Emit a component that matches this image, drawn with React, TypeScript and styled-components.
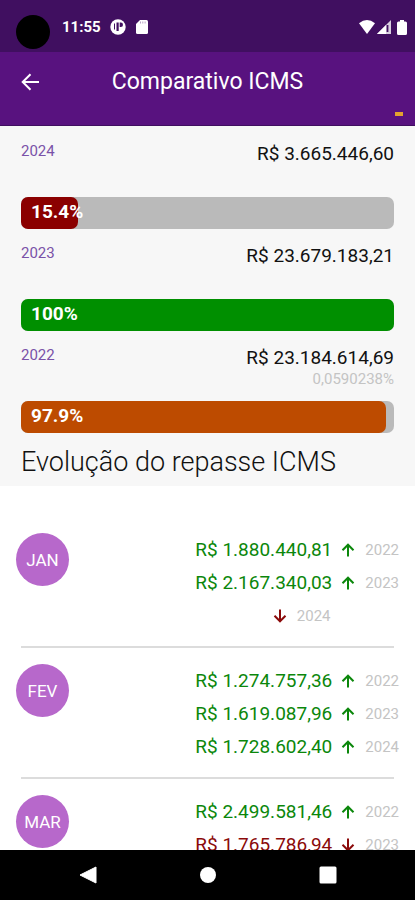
import React from "react";
import styled, { createGlobalStyle } from "styled-components";

const GlobalStyle = createGlobalStyle`
  *, *::before, *::after { box-sizing: border-box; }
  body { margin: 0; background: #ffffff; font-family: Roboto, "Noto Sans", sans-serif; }
  h1, h2, p, ul { margin: 0; padding: 0; }
  ul { list-style: none; }
`;

const Screen = styled.div`
  display: flex;
  flex-direction: column;
  height: 100vh;
  overflow: hidden;
`;

const StatusBar = styled.div`
  display: flex;
  align-items: center;
  flex: none;
  height: 52px;
  padding: 2px 4px 0 16px;
  background: #400f60;
  color: #ffffff;
`;

const CameraHole = styled.span`
  width: 34px;
  height: 34px;
  margin: 13px 12px 0 0;
  align-self: flex-start;
  border-radius: 50%;
  background: #000000;
`;

const Clock = styled.span`
  font-size: 15px;
  font-weight: 700;
  line-height: 20px;
  margin-right: 9px;
`;

const StatusIcons = styled.div<{ $end?: boolean }>`
  display: flex;
  align-items: center;
  gap: ${(p) => (p.$end ? 2 : 10)}px;
  margin-left: ${(p) => (p.$end ? "auto" : "0")};
`;

const AppBar = styled.header`
  display: grid;
  grid-template-columns: 48px 1fr 48px;
  align-items: start;
  flex: none;
  height: 74px;
  padding: 14px 6px 0;
  background: #58127f;
  border-bottom: 1px solid #400f60;
  color: #ffffff;
`;

const BackButton = styled.button`
  display: flex;
  align-items: center;
  justify-content: center;
  height: 32px;
  padding: 0;
  border: 0;
  background: none;
  color: inherit;
  cursor: pointer;
`;

const Title = styled.h1`
  font-size: 23px;
  font-weight: 400;
  line-height: 32px;
  text-align: center;
  white-space: nowrap;
`;

const Marker = styled.span`
  align-self: end;
  justify-self: end;
  width: 8px;
  height: 4px;
  margin: 0 6px 9px 0;
  background: #e3a22f;
`;

const Content = styled.main`
  flex: 1;
  min-height: 0;
  overflow: hidden;
`;

const Summary = styled.section`
  padding: 14px 21px 8px;
  background: #f7f7f7;
`;

const YearBlock = styled.div`
  display: flex;
  flex-direction: column;
  margin-bottom: 13px;
`;

const YearHeader = styled.div`
  display: flex;
  justify-content: space-between;
  align-items: flex-start;
  height: 57px;
`;

const YearLabel = styled.span`
  font-size: 15px;
  line-height: 22px;
  color: #7a52a8;
`;

const Totals = styled.div`
  text-align: right;
  padding-top: 2px;
`;

const Total = styled.p`
  font-size: 19px;
  line-height: 24px;
  color: #111111;
`;

const Change = styled.p`
  font-size: 15px;
  line-height: 18px;
  color: #c4c4c4;
`;

const Track = styled.div`
  height: 32px;
  border-radius: 7px;
  background: #bababa;
`;

const Fill = styled.div<{ $color: string }>`
  height: 100%;
  padding-left: 10px;
  border-radius: 7px;
  background: ${(p) => p.$color};
  color: #ffffff;
  font-size: 19px;
  font-weight: 700;
  line-height: 30px;
  white-space: nowrap;
`;

const SectionTitle = styled.h2`
  font-size: 27px;
  font-weight: 300;
  line-height: 32px;
  color: #111111;
`;

const MonthList = styled.ul`
  padding-top: 31px;
`;

const MonthRow = styled.div`
  display: flex;
  justify-content: space-between;
  align-items: flex-start;
  padding: 16px 16px 0;
`;

const MonthBadge = styled.span`
  display: flex;
  align-items: center;
  justify-content: center;
  width: 53px;
  height: 53px;
  border-radius: 50%;
  background: #b768cb;
  color: #ffffff;
  font-size: 17px;
`;

const Values = styled.div`
  display: flex;
  flex-direction: column;
  align-items: center;
`;

const ValueRow = styled.div<{ $up: boolean }>`
  display: flex;
  align-items: center;
  height: 33px;
  font-size: 19px;
  color: ${(p) => (p.$up ? "#0b870b" : "#8b0a0a")};

  svg { margin: 0 8px 0 7px; }
`;

const ValueYear = styled.span`
  font-size: 15px;
  color: #c4c4c4;
`;

const Divider = styled.hr`
  height: 2px;
  margin: 14px 21px 0;
  border: 0;
  background: #dcdcdc;
`;

const NavBar = styled.nav`
  display: grid;
  grid-template-columns: repeat(3, 120px);
  justify-content: center;
  flex: none;
  height: 50px;
  background: #000000;
`;

const NavButton = styled.button`
  display: flex;
  align-items: center;
  justify-content: center;
  padding: 0;
  border: 0;
  background: none;
  cursor: pointer;
`;

type Entry = { year: number; amount?: string; up: boolean };

const totals = [
  { year: 2024, total: "R$ 3.665.446,60", percent: 15.4, color: "#8b0000" },
  { year: 2023, total: "R$ 23.679.183,21", percent: 100, color: "#008f00" },
  { year: 2022, total: "R$ 23.184.614,69", percent: 97.9, color: "#bd4b00", change: "0,0590238%" },
];

const months: { name: string; entries: Entry[] }[] = [
  {
    name: "JAN",
    entries: [
      { year: 2022, amount: "R$ 1.880.440,81", up: true },
      { year: 2023, amount: "R$ 2.167.340,03", up: true },
      { year: 2024, up: false },
    ],
  },
  {
    name: "FEV",
    entries: [
      { year: 2022, amount: "R$ 1.274.757,36", up: true },
      { year: 2023, amount: "R$ 1.619.087,96", up: true },
      { year: 2024, amount: "R$ 1.728.602,40", up: true },
    ],
  },
  {
    name: "MAR",
    entries: [
      { year: 2022, amount: "R$ 2.499.581,46", up: true },
      { year: 2023, amount: "R$ 1.765.786,94", up: false },
    ],
  },
];

function Arrow({ up }: { up: boolean }) {
  return (
    <svg width="18" height="18" viewBox="0 0 18 18" fill="none" stroke="currentColor" strokeWidth="2" aria-hidden="true">
      <path d={up ? "M9 15.500V4M3.500 9.200L9 3.700l5.500 5.500" : "M9 2.500v12M3.500 8.800L9 14.300l5.500-5.500"} />
    </svg>
  );
}

export default function App() {
  return (
    <>
      <GlobalStyle />
      <Screen>
        <StatusBar>
          <CameraHole />
          <Clock>11:55</Clock>
          <StatusIcons>
            <svg width="16" height="16" viewBox="0 0 16 16" aria-hidden="true">
              <circle cx="8" cy="8" r="7.7" fill="#fff" />
              <path d="M4 4.500h1v6H4zM6.500 3.500h2.200v8.500H6.500z" fill="#400f60" />
              <path d="M9.700 3.500h1.100a2.200 2.200 0 0 1 0 4.400H9.700z" fill="#400f60" />
            </svg>
            <svg width="12" height="14" viewBox="0 0 12 14" aria-hidden="true">
              <path d="M4 0H10.500Q12 0 12 1.500V12.500Q12 14 10.500 14H1.500Q0 14 0 12.500V4Z" fill="#fff" />
              <path d="M4.500 1.500v2M6.800 1.500v2M9.100 1.500v2" stroke="#b9a3c6" strokeWidth="1" />
            </svg>
          </StatusIcons>
          <StatusIcons $end>
            <svg width="16" height="14" viewBox="0 0 16 14" aria-hidden="true">
              <path d="M0 3.2Q8-3 16 3.2L8 14Z" fill="#fff" />
            </svg>
            <svg width="14" height="14" viewBox="0 0 14 14" aria-hidden="true">
              <path d="M14 0V14H0Z" fill="#d9cfe0" />
              <path d="M9 5V14H0Z" fill="#fff" />
              <path d="M10.500 5V12" stroke="#400f60" strokeWidth="1.800" />
            </svg>
            <svg width="18" height="15" viewBox="0 0 18 15" aria-hidden="true">
              <path d="M7 0h4v1.500h1.500Q14 1.500 14 3v10.500Q14 15 12.500 15h-7Q4 15 4 13.500V3Q4 1.500 5.500 1.500H7Z" fill="#fff" />
            </svg>
          </StatusIcons>
        </StatusBar>
        <AppBar>
          <BackButton aria-label="Voltar">
            <svg width="20" height="18" viewBox="0 0 20 18" fill="none" stroke="currentColor" strokeWidth="2" aria-hidden="true">
              <path d="M19 9H3M10.500 1.200L2.700 9l7.800 7.800" />
            </svg>
          </BackButton>
          <Title>Comparativo ICMS</Title>
          <Marker />
        </AppBar>
        <Content>
          <Summary>
            {totals.map((t) => (
              <YearBlock key={t.year}>
                <YearHeader>
                  <YearLabel>{t.year}</YearLabel>
                  <Totals>
                    <Total>{t.total}</Total>
                    {t.change && <Change>{t.change}</Change>}
                  </Totals>
                </YearHeader>
                <Track>
                  <Fill $color={t.color} style={{ width: `${t.percent}%` }}>{t.percent}%</Fill>
                </Track>
              </YearBlock>
            ))}
            <SectionTitle>Evolução do repasse ICMS</SectionTitle>
          </Summary>
          <MonthList>
            {months.map((m, i) => (
              <li key={m.name}>
                <MonthRow>
                  <MonthBadge>{m.name}</MonthBadge>
                  <Values>
                    {m.entries.map((e) => (
                      <ValueRow key={e.year} $up={e.up}>
                        {e.amount && <span>{e.amount}</span>}
                        <Arrow up={e.up} />
                        <ValueYear>{e.year}</ValueYear>
                      </ValueRow>
                    ))}
                  </Values>
                </MonthRow>
                {i < months.length - 1 && <Divider />}
              </li>
            ))}
          </MonthList>
        </Content>
        <NavBar>
          <NavButton aria-label="Voltar">
            <svg width="18" height="18" viewBox="0 0 18 18" aria-hidden="true">
              <path d="M17 1V17L1 9Z" fill="#fff" stroke="#fff" strokeWidth="1" strokeLinejoin="round" />
            </svg>
          </NavButton>
          <NavButton aria-label="Início">
            <svg width="16" height="16" viewBox="0 0 16 16" aria-hidden="true">
              <circle cx="8" cy="8" r="8" fill="#fff" />
            </svg>
          </NavButton>
          <NavButton aria-label="Recentes">
            <svg width="18" height="18" viewBox="0 0 18 18" aria-hidden="true">
              <rect x="0.500" y="0.500" width="17" height="17" rx="1.500" fill="#fff" />
            </svg>
          </NavButton>
        </NavBar>
      </Screen>
    </>
  );
}
